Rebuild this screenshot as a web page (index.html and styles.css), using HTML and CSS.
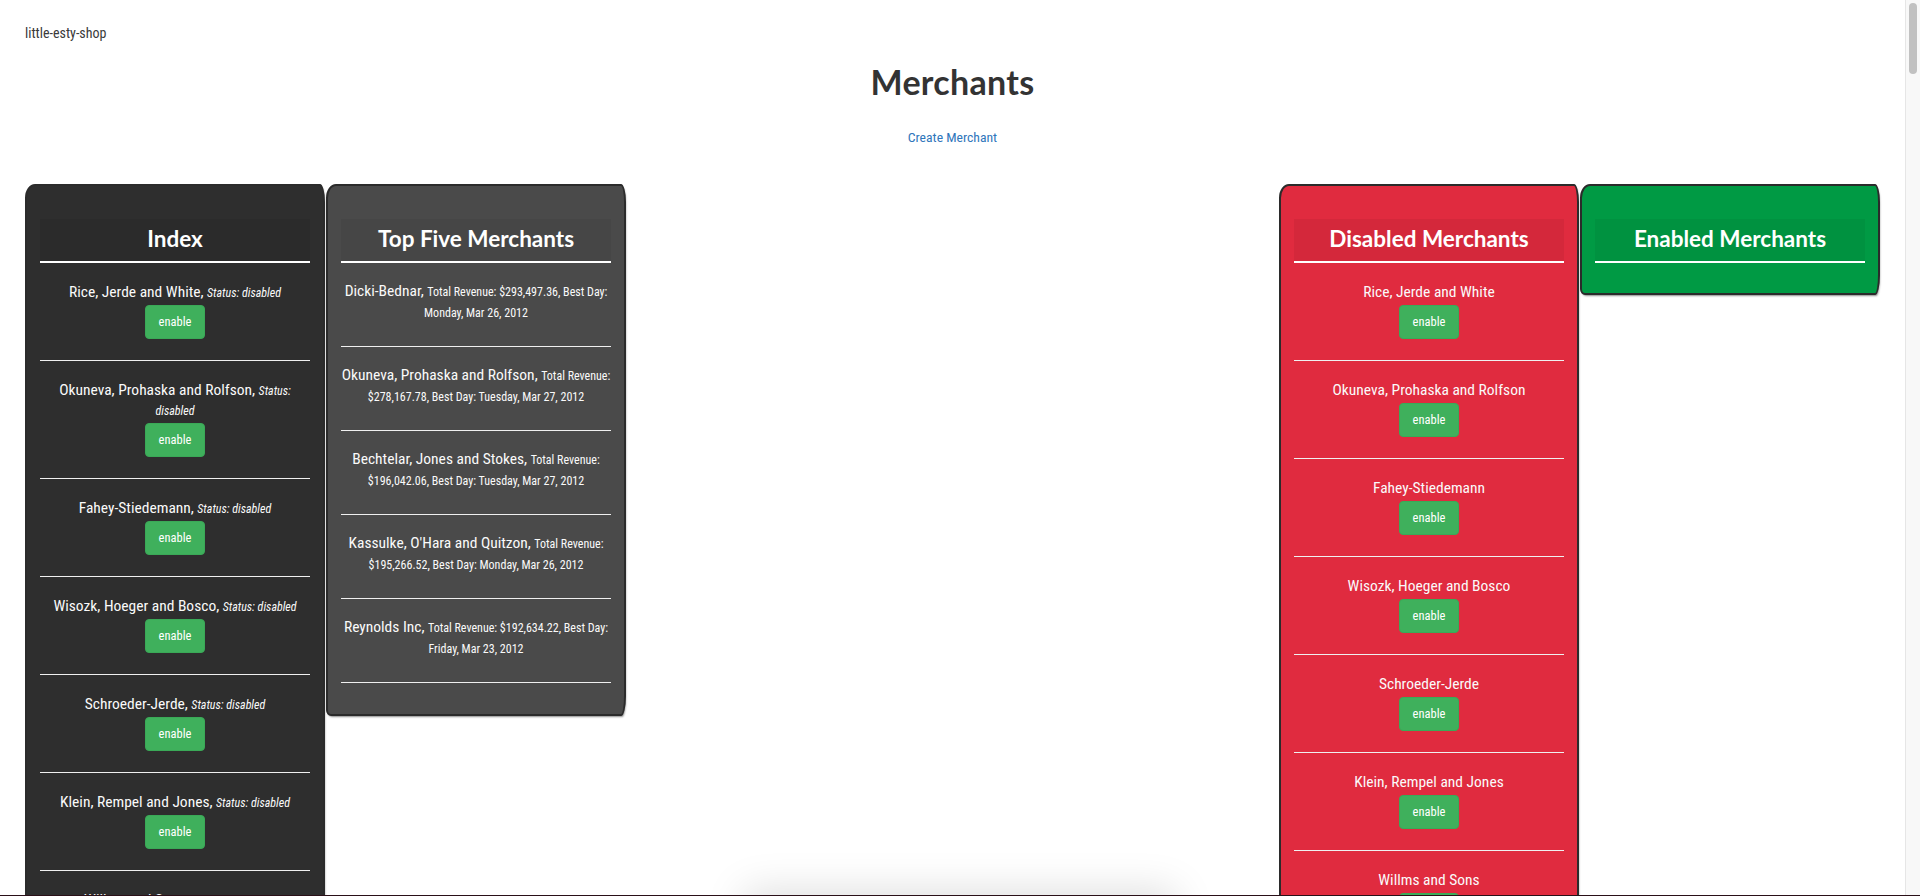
FILE: index.html
```html
<!DOCTYPE html>
<html lang="en">
<head>
<meta charset="utf-8">
<title>little-esty-shop</title>
<link rel="stylesheet" href="styles.css">
</head>
<body>
<header class="topbar"><span class="brand">little-esty-shop</span></header>
<main class="page">
  <h1 class="title">Merchants</h1>
  <p class="create"><a class="create-link" href="#">Create Merchant</a></p>
  <div class="boards">
    <div class="group">
      <section class="card card-index">
        <h2 class="card-title">Index</h2>
        <ul class="list">
          <li class="item"><p class="line"><span class="name">Rice, Jerde and White,</span> <em class="status">Status: disabled</em></p><button class="btn">enable</button></li>
          <li class="item"><p class="line"><span class="name">Okuneva, Prohaska and Rolfson,</span> <em class="status">Status: disabled</em></p><button class="btn">enable</button></li>
          <li class="item"><p class="line"><span class="name">Fahey-Stiedemann,</span> <em class="status">Status: disabled</em></p><button class="btn">enable</button></li>
          <li class="item"><p class="line"><span class="name">Wisozk, Hoeger and Bosco,</span> <em class="status">Status: disabled</em></p><button class="btn">enable</button></li>
          <li class="item"><p class="line"><span class="name">Schroeder-Jerde,</span> <em class="status">Status: disabled</em></p><button class="btn">enable</button></li>
          <li class="item"><p class="line"><span class="name">Klein, Rempel and Jones,</span> <em class="status">Status: disabled</em></p><button class="btn">enable</button></li>
          <li class="item"><p class="line"><span class="name">Willms and Sons,</span> <em class="status">Status: disabled</em></p><button class="btn">enable</button></li>
          <li class="item"><p class="line"><span class="name">Cummings-Thiel,</span> <em class="status">Status: disabled</em></p><button class="btn">enable</button></li>
          <li class="item"><p class="line"><span class="name">Williamson Group,</span> <em class="status">Status: disabled</em></p><button class="btn">enable</button></li>
          <li class="item"><p class="line"><span class="name">Bernhard-Johns,</span> <em class="status">Status: disabled</em></p><button class="btn">enable</button></li>
          <li class="item"><p class="line"><span class="name">Osinski, Pollich and Koelpin,</span> <em class="status">Status: disabled</em></p><button class="btn">enable</button></li>
          <li class="item"><p class="line"><span class="name">Hand-Spencer,</span> <em class="status">Status: disabled</em></p><button class="btn">enable</button></li>
          <li class="item"><p class="line"><span class="name">Bechtelar, Jones and Stokes,</span> <em class="status">Status: disabled</em></p><button class="btn">enable</button></li>
          <li class="item"><p class="line"><span class="name">Pollich and Sons,</span> <em class="status">Status: disabled</em></p><button class="btn">enable</button></li>
          <li class="item"><p class="line"><span class="name">Kozey Group,</span> <em class="status">Status: disabled</em></p><button class="btn">enable</button></li>
          <li class="item"><p class="line"><span class="name">Tillman Group,</span> <em class="status">Status: disabled</em></p><button class="btn">enable</button></li>
          <li class="item"><p class="line"><span class="name">Dicki-Bednar,</span> <em class="status">Status: disabled</em></p><button class="btn">enable</button></li>
          <li class="item"><p class="line"><span class="name">Kassulke, O'Hara and Quitzon,</span> <em class="status">Status: disabled</em></p><button class="btn">enable</button></li>
          <li class="item"><p class="line"><span class="name">Reynolds Inc,</span> <em class="status">Status: disabled</em></p><button class="btn">enable</button></li>
        </ul>
      </section>
      <section class="card card-top">
        <h2 class="card-title">Top Five Merchants</h2>
        <ul class="list">
          <li class="item item-top"><p class="line"><span class="name">Dicki-Bednar,</span> <span class="meta">Total Revenue: $293,497.36, Best Day: Monday, Mar 26, 2012</span></p></li>
          <li class="item item-top"><p class="line"><span class="name">Okuneva, Prohaska and Rolfson,</span> <span class="meta">Total Revenue: $278,167.78, Best Day: Tuesday, Mar 27, 2012</span></p></li>
          <li class="item item-top"><p class="line"><span class="name">Bechtelar, Jones and Stokes,</span> <span class="meta">Total Revenue: $196,042.06, Best Day: Tuesday, Mar 27, 2012</span></p></li>
          <li class="item item-top"><p class="line"><span class="name">Kassulke, O'Hara and Quitzon,</span> <span class="meta">Total Revenue: $195,266.52, Best Day: Monday, Mar 26, 2012</span></p></li>
          <li class="item item-top"><p class="line"><span class="name">Reynolds Inc,</span> <span class="meta">Total Revenue: $192,634.22, Best Day: Friday, Mar 23, 2012</span></p></li>
        </ul>
      </section>
    </div>
    <div class="group">
      <section class="card card-disabled">
        <h2 class="card-title">Disabled Merchants</h2>
        <ul class="list">
          <li class="item"><p class="line"><span class="name">Rice, Jerde and White</span></p><button class="btn">enable</button></li>
          <li class="item"><p class="line"><span class="name">Okuneva, Prohaska and Rolfson</span></p><button class="btn">enable</button></li>
          <li class="item"><p class="line"><span class="name">Fahey-Stiedemann</span></p><button class="btn">enable</button></li>
          <li class="item"><p class="line"><span class="name">Wisozk, Hoeger and Bosco</span></p><button class="btn">enable</button></li>
          <li class="item"><p class="line"><span class="name">Schroeder-Jerde</span></p><button class="btn">enable</button></li>
          <li class="item"><p class="line"><span class="name">Klein, Rempel and Jones</span></p><button class="btn">enable</button></li>
          <li class="item"><p class="line"><span class="name">Willms and Sons</span></p><button class="btn">enable</button></li>
          <li class="item"><p class="line"><span class="name">Cummings-Thiel</span></p><button class="btn">enable</button></li>
          <li class="item"><p class="line"><span class="name">Williamson Group</span></p><button class="btn">enable</button></li>
          <li class="item"><p class="line"><span class="name">Bernhard-Johns</span></p><button class="btn">enable</button></li>
          <li class="item"><p class="line"><span class="name">Osinski, Pollich and Koelpin</span></p><button class="btn">enable</button></li>
          <li class="item"><p class="line"><span class="name">Hand-Spencer</span></p><button class="btn">enable</button></li>
          <li class="item"><p class="line"><span class="name">Bechtelar, Jones and Stokes</span></p><button class="btn">enable</button></li>
          <li class="item"><p class="line"><span class="name">Pollich and Sons</span></p><button class="btn">enable</button></li>
          <li class="item"><p class="line"><span class="name">Kozey Group</span></p><button class="btn">enable</button></li>
          <li class="item"><p class="line"><span class="name">Tillman Group</span></p><button class="btn">enable</button></li>
          <li class="item"><p class="line"><span class="name">Dicki-Bednar</span></p><button class="btn">enable</button></li>
          <li class="item"><p class="line"><span class="name">Kassulke, O'Hara and Quitzon</span></p><button class="btn">enable</button></li>
          <li class="item"><p class="line"><span class="name">Reynolds Inc</span></p><button class="btn">enable</button></li>
        </ul>
      </section>
      <section class="card card-enabled">
        <h2 class="card-title">Enabled Merchants</h2>
      </section>
    </div>
  </div>
</main>
<div class="toast" aria-hidden="true"></div>
<div class="scrollbar" aria-hidden="true"><div class="scrollbar-thumb"></div></div>
<div class="edge" aria-hidden="true"></div>
</body>
</html>
```

FILE: styles.css
```css
* { box-sizing: border-box; }

html, body { margin: 0; padding: 0; background: #fff; }

body {
  padding-right: 15px;
  font-family: "Roboto Condensed", "Liberation Sans Narrow", Lato, sans-serif;
  font-size: 15px;
  color: #2f2f2f;
}

.topbar {
  padding: 23px 25px 0;
  line-height: 20px;
}

.brand {
  font-size: 14px;
  color: #3a3a3a;
}

.page {
  padding: 0 25px 40px;
}

.title {
  margin: 19px 0 0;
  text-align: center;
  font-family: Lato, sans-serif;
  font-weight: 700;
  font-size: 34px;
  line-height: 40px;
  color: #333;
  letter-spacing: 0.3px;
}

.create {
  margin: 25px 0 0;
  text-align: center;
  line-height: 20px;
  font-size: 13.7px;
}

.create-link {
  color: #2f76bb;
  text-decoration: none;
}

.boards {
  margin-top: 37px;
  display: flex;
  justify-content: space-between;
  align-items: flex-start;
}

.group {
  display: flex;
  gap: 1px;
  align-items: flex-start;
}

.card {
  width: 300px;
  padding: 33px 13px 30px;
  border: 2px solid #2b2b2b;
  border-radius: 10px 5px 5px 5px / 14px 18px 20px 6px;
  box-shadow: 1px 2px 2px -1px rgba(0, 0, 0, 0.45);
  color: #fafafa;
}

.card-index { background: #2e2e2e; }
.card-top { background: #4a4a4a; padding-bottom: 31px; }
.card-disabled { background: #e02b3f; }
.card-enabled { background: #009a44; }

.card-title {
  margin: 0;
  padding: 5px 0 7px;
  text-align: center;
  font-family: Lato, sans-serif;
  font-weight: 700;
  font-size: 22.5px;
  line-height: 30px;
  color: #fff;
  background: rgba(0, 0, 0, 0.05);
  border-bottom: 2px solid #fff;
}

.list {
  list-style: none;
  margin: 0;
  padding: 0;
}

.item {
  padding: 19px 0 21px;
  border-bottom: 1px solid #f0f0f0;
  text-align: center;
}

.item-top {
  padding: 18px 0 23px;
}

.line {
  margin: 0;
  line-height: 20px;
}

.item-top .line {
  line-height: 21px;
}

.name,
.status,
.meta {
  line-height: 1;
}

.name {
  font-size: 15.5px;
}

.status {
  font-size: 12px;
  font-style: italic;
}

.meta {
  font-size: 12px;
}

.btn {
  display: block;
  margin: 3px auto 0;
  height: 34px;
  padding: 0 13px;
  border: 1px solid #3aa957;
  border-radius: 4px;
  background: #3fb05c;
  color: #fff;
  font-family: inherit;
  font-size: 12.5px;
  line-height: 32px;
  cursor: pointer;
}

.toast {
  position: fixed;
  left: 50%;
  top: 100%;
  width: 420px;
  height: 60px;
  margin-left: -210px;
  background: #fff;
  box-shadow: 0 0 40px 6px rgba(0, 0, 0, 0.13);
}

.scrollbar {
  position: fixed;
  top: 0;
  right: 0;
  bottom: 0;
  width: 15px;
  background: #f8f8f8;
  border-left: 1px solid #e6e6e6;
}

.scrollbar-thumb {
  margin: 3px 0 0 3px;
  width: 8px;
  height: 71px;
  border-radius: 4px;
  background: #c1c1c1;
}

.edge {
  position: fixed;
  left: 0;
  right: 0;
  bottom: 0;
  height: 1px;
  background: #2a1018;
}
```
